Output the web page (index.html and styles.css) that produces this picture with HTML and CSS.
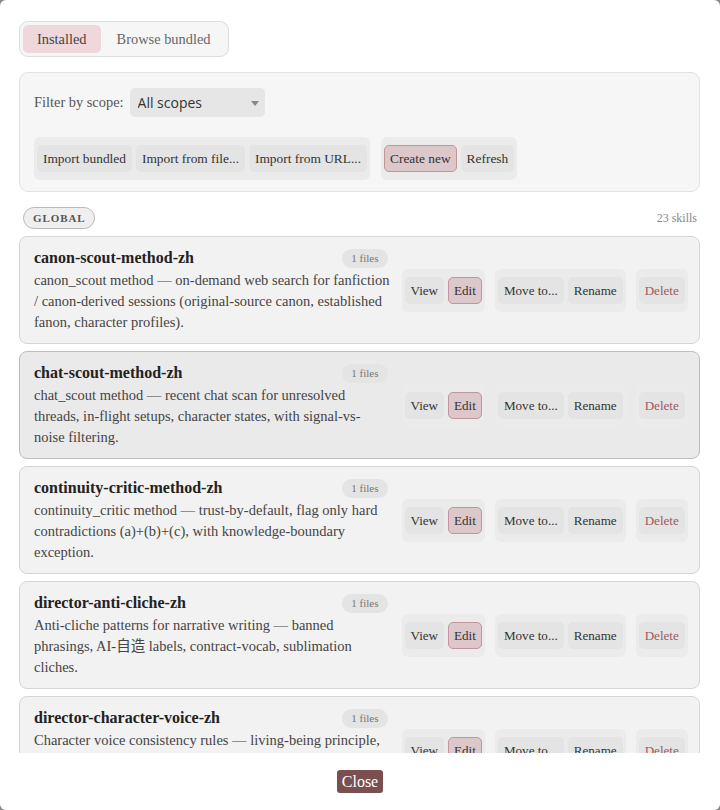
FILE: index.html
```html
<!DOCTYPE html>
<html lang="en">
<head>
    <meta charset="UTF-8">
    <meta name="viewport" content="width=device-width, initial-scale=1.0">
    <title>Skills</title>
    <link rel="stylesheet" href="styles.css">
</head>
<body>
    <div class="dialog">
        <div class="dialog-body">
            <div class="tabs">
                <button class="tab active">Installed</button>
                <button class="tab">Browse bundled</button>
            </div>

            <div class="panel">
                <div class="filter-row">
                    <label for="scope">Filter by scope:</label>
                    <span class="select-wrap">
                        <select id="scope">
                            <option>All scopes</option>
                            <option>Global</option>
                        </select>
                    </span>
                </div>
                <div class="panel-actions">
                    <div class="btn-group">
                        <button class="btn">Import bundled</button>
                        <button class="btn">Import from file...</button>
                        <button class="btn">Import from URL...</button>
                    </div>
                    <div class="btn-group">
                        <button class="btn primary">Create new</button>
                        <button class="btn">Refresh</button>
                    </div>
                </div>
            </div>

            <div class="scope-head">
                <span class="scope-pill">GLOBAL</span>
                <span class="count">23 skills</span>
            </div>

            <div class="skill-list">
                <div class="skill">
                    <div class="skill-info">
                        <div class="skill-title">
                            <span class="skill-name">canon-scout-method-zh</span>
                            <span class="files">1 files</span>
                        </div>
                        <p class="skill-desc">canon_scout method — on-demand web search for fanfiction / canon-derived sessions (original-source canon, established fanon, character profiles).</p>
                    </div>
                    <div class="skill-actions">
                        <div class="btn-group"><button class="btn">View</button><button class="btn primary">Edit</button></div>
                        <div class="btn-group"><button class="btn">Move to...</button><button class="btn">Rename</button></div>
                        <div class="btn-group"><button class="btn danger">Delete</button></div>
                    </div>
                </div>

                <div class="skill hover">
                    <div class="skill-info">
                        <div class="skill-title">
                            <span class="skill-name">chat-scout-method-zh</span>
                            <span class="files">1 files</span>
                        </div>
                        <p class="skill-desc">chat_scout method — recent chat scan for unresolved threads, in-flight setups, character states, with signal-vs-noise filtering.</p>
                    </div>
                    <div class="skill-actions">
                        <div class="btn-group"><button class="btn">View</button><button class="btn primary">Edit</button></div>
                        <div class="btn-group"><button class="btn">Move to...</button><button class="btn">Rename</button></div>
                        <div class="btn-group"><button class="btn danger">Delete</button></div>
                    </div>
                </div>

                <div class="skill">
                    <div class="skill-info">
                        <div class="skill-title">
                            <span class="skill-name">continuity-critic-method-zh</span>
                            <span class="files">1 files</span>
                        </div>
                        <p class="skill-desc">continuity_critic method — trust-by-default, flag only hard contradictions (a)+(b)+(c), with knowledge-boundary exception.</p>
                    </div>
                    <div class="skill-actions">
                        <div class="btn-group"><button class="btn">View</button><button class="btn primary">Edit</button></div>
                        <div class="btn-group"><button class="btn">Move to...</button><button class="btn">Rename</button></div>
                        <div class="btn-group"><button class="btn danger">Delete</button></div>
                    </div>
                </div>

                <div class="skill">
                    <div class="skill-info">
                        <div class="skill-title">
                            <span class="skill-name">director-anti-cliche-zh</span>
                            <span class="files">1 files</span>
                        </div>
                        <p class="skill-desc">Anti-cliche patterns for narrative writing — banned phrasings, AI-自造 labels, contract-vocab, sublimation cliches.</p>
                    </div>
                    <div class="skill-actions">
                        <div class="btn-group"><button class="btn">View</button><button class="btn primary">Edit</button></div>
                        <div class="btn-group"><button class="btn">Move to...</button><button class="btn">Rename</button></div>
                        <div class="btn-group"><button class="btn danger">Delete</button></div>
                    </div>
                </div>

                <div class="skill">
                    <div class="skill-info">
                        <div class="skill-title">
                            <span class="skill-name">director-character-voice-zh</span>
                            <span class="files">1 files</span>
                        </div>
                        <p class="skill-desc">Character voice consistency rules — living-being principle, speech registers, dialogue tics and per-character vocabulary.</p>
                    </div>
                    <div class="skill-actions">
                        <div class="btn-group"><button class="btn">View</button><button class="btn primary">Edit</button></div>
                        <div class="btn-group"><button class="btn">Move to...</button><button class="btn">Rename</button></div>
                        <div class="btn-group"><button class="btn danger">Delete</button></div>
                    </div>
                </div>
            </div>
        </div>

        <div class="dialog-footer">
            <button class="close-btn">Close</button>
        </div>
    </div>
</body>
</html>
```

FILE: styles.css
```css
body {
    margin: 0;
    padding: 0;
    background-color: #8a8a8a;
    font-family: "Liberation Serif", "Noto Sans CJK SC", serif;
    color: #333;
}
button {
    font-family: inherit;
    cursor: pointer;
    white-space: nowrap;
}
.dialog {
    width: 720px;
    height: 810px;
    background: white;
    border-radius: 6px;
    display: flex;
    flex-direction: column;
    overflow: hidden;
}
.dialog-body {
    flex: 1;
    overflow: hidden;
    padding: 21px 20px 0 19px;
}
.dialog-footer {
    height: 57px;
    display: flex;
    align-items: center;
    justify-content: center;
}
.close-btn {
    background-color: #7a4f50;
    color: white;
    border: none;
    border-radius: 3px;
    font-size: 16px;
    line-height: 19px;
    padding: 2px 5px;
}

/* tabs */
.tabs {
    display: inline-flex;
    gap: 2px;
    padding: 3px;
    background: #f6f6f6;
    border: 1px solid #dedede;
    border-radius: 9px;
}
.tab {
    border: none;
    background: none;
    font-size: 14.4px;
    line-height: 18px;
    padding: 5px 14px;
    border-radius: 5px;
    color: #666;
}
.tab.active {
    background: #efd8dc;
    color: #444;
}

/* filter panel */
.panel {
    margin-top: 15px;
    background: #f6f6f6;
    border: 1px solid #e2e2e2;
    border-radius: 9px;
    padding: 15px 14px 11px;
}
.filter-row {
    display: flex;
    align-items: center;
    gap: 6px;
}
.filter-row label {
    font-size: 14.4px;
    color: #555;
}
.select-wrap {
    position: relative;
    display: inline-block;
}
.select-wrap::after {
    content: "";
    position: absolute;
    right: 6px;
    top: 13px;
    border-left: 4px solid transparent;
    border-right: 4px solid transparent;
    border-top: 5px solid #888;
}
select {
    appearance: none;
    -webkit-appearance: none;
    width: 135px;
    height: 29px;
    border: none;
    border-radius: 5px;
    background: #e6e6e6;
    font-family: "Open Sans", sans-serif;
    font-size: 14px;
    color: #333;
    padding: 0 8px;
}
.panel-actions {
    display: flex;
    gap: 11px;
    margin-top: 20px;
}

/* button groups */
.btn-group {
    display: flex;
    gap: 4px;
    padding: 8px 3px;
    background: #ebebeb;
    border-radius: 6px;
}
.btn {
    border: 1px solid transparent;
    background: #e4e4e4;
    border-radius: 5px;
    font-size: 13.4px;
    line-height: 17px;
    padding: 4px 5px;
    color: #333;
}
.skill .btn {
    font-size: 13.1px;
}
.btn.primary {
    background: #dcc7cb;
    border-color: #c2959c;
}
.btn.danger {
    color: #9b5a62;
}

/* scope header */
.scope-head {
    display: flex;
    justify-content: space-between;
    align-items: center;
    margin: 15px 3px 7px 4px;
}
.scope-pill {
    font-size: 11px;
    font-weight: bold;
    letter-spacing: 0.9px;
    color: #555;
    background: #efefef;
    border: 1px solid #bbb;
    border-radius: 11px;
    padding: 3px 9px;
    line-height: 14px;
}
.count {
    font-size: 12px;
    color: #888;
}

/* skill cards */
.skill-list {
    display: flex;
    flex-direction: column;
    gap: 7px;
}
.skill {
    display: flex;
    align-items: center;
    gap: 11px;
    background: #f2f2f2;
    border: 1px solid #d6d6d6;
    border-radius: 8px;
    padding: 11px 14px 10px;
}
.skill.hover {
    background: #eaeaea;
    border-color: #bdbdbd;
}
.skill-info {
    width: 356.5px;
    flex-shrink: 0;
}
.skill-title {
    display: flex;
    justify-content: space-between;
    align-items: center;
    height: 20px;
    margin-bottom: 2px;
    padding-right: 3px;
}
.skill-name {
    font-weight: bold;
    font-size: 16px;
    color: #222;
}
.files {
    font-size: 11px;
    color: #777;
    background: #e4e4e4;
    border-radius: 10px;
    padding: 3px 9px;
    line-height: 13px;
}
.skill-desc {
    margin: 0;
    font-size: 14.5px;
    line-height: 21px;
    color: #444;
    height: 63px;
}
.skill-actions {
    display: flex;
    gap: 10px;
}
```
